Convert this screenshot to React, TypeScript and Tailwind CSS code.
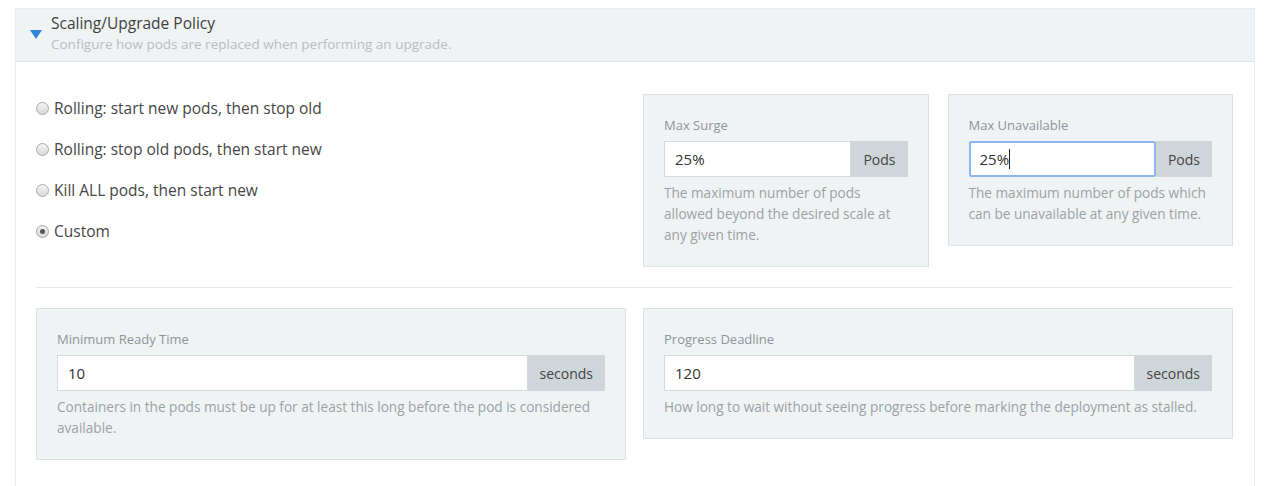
const RADIOS = [
  { id: "start-first", label: "Rolling: start new pods, then stop old" },
  { id: "stop-first", label: "Rolling: stop old pods, then start new" },
  { id: "recreate", label: "Kill ALL pods, then start new" },
  { id: "custom", label: "Custom", checked: true },
];

function Radio({ label, checked }: { label: string; checked?: boolean }) {
  return (
    <label className="flex items-center gap-[5px] h-[41px] text-[15.5px] text-[#464646]">
      <span className="flex items-center justify-center w-[13px] h-[13px] rounded-full border border-[#a9a9a9] bg-gradient-to-b from-[#f4f4f4] to-[#d9d9d9]">
        {checked && <span className="w-[5px] h-[5px] rounded-full bg-[#555]" />}
      </span>
      {label}
    </label>
  );
}

function Field({
  label,
  value,
  unit,
  help,
  focused,
}: {
  label: string;
  value: string;
  unit: string;
  help: string;
  focused?: boolean;
}) {
  return (
    <div className="bg-[#f0f3f4] border border-[#dde3e5] pt-[20px] pb-[21px] px-[20px]">
      <p className="text-[13px] leading-[20px] text-[#8b959a] mb-[6px]">{label}</p>
      <div className="flex h-[36px]">
        <div
          className={
            focused
              ? "flex-1 flex items-center bg-white border-2 border-[#8fb5f1] rounded-[2px] pl-[9px] text-[15px] text-[#333]"
              : "flex-1 flex items-center bg-white border border-[#d5dcdf] pl-[10px] text-[15px] text-[#333]"
          }
        >
          {value}
          {focused && <span className="w-px h-[20px] bg-[#222]" />}
        </div>
        <div className="flex items-center px-[12px] bg-[#cfd6d9] text-[14px] text-[#444]">
          {unit}
        </div>
      </div>
      <p className="mt-[5px] text-[13.6px] leading-[21px] text-[#9aa2a6]">{help}</p>
    </div>
  );
}

export default function App() {
  return (
    <div className="h-[486px] overflow-hidden flex flex-col bg-white pt-2 pl-[15px] pr-[11px] font-['Open_Sans',sans-serif]">
      <div className="flex-1 border-x border-t border-[#e8ecee]">
        <div className="flex bg-[#f0f3f4] border-b border-[#dfe5e7] h-[53px]">
          <div className="w-[35px] flex justify-end pt-[21px] pr-[9px]">
            <svg width="12" height="9" viewBox="0 0 12 9">
              <path d="M0 0 L12 0 L6 9 Z" fill="#2f86d6" />
            </svg>
          </div>
          <div className="pt-[3px]">
            <h2 className="text-[15.5px] leading-[22px] text-[#3f3f3f]">Scaling/Upgrade Policy</h2>
            <p className="text-[13.5px] leading-[20px] text-[#b7bec2]">
              Configure how pods are replaced when performing an upgrade.
            </p>
          </div>
        </div>

        <div className="pl-[20px] pr-[21px]">
          <div className="grid grid-cols-2 gap-[17px]">
            <div className="pt-[26px]">
              {RADIOS.map((r) => (
                <Radio key={r.id} label={r.label} checked={r.checked} />
              ))}
            </div>
            <div className="grid grid-cols-2 gap-[19px] items-start pt-[32px]">
              <Field
                label="Max Surge"
                value="25%"
                unit="Pods"
                help="The maximum number of pods allowed beyond the desired scale at any given time."
              />
              <Field
                label="Max Unavailable"
                value="25%"
                unit="Pods"
                focused
                help="The maximum number of pods which can be unavailable at any given time."
              />
            </div>
          </div>

          <hr className="my-[20px] border-t border-[#e4e8ea]" />

          <div className="grid grid-cols-2 gap-[17px] items-start">
            <Field
              label="Minimum Ready Time"
              value="10"
              unit="seconds"
              help="Containers in the pods must be up for at least this long before the pod is considered available."
            />
            <Field
              label="Progress Deadline"
              value="120"
              unit="seconds"
              help="How long to wait without seeing progress before marking the deployment as stalled."
            />
          </div>
        </div>
      </div>
    </div>
  );
}
